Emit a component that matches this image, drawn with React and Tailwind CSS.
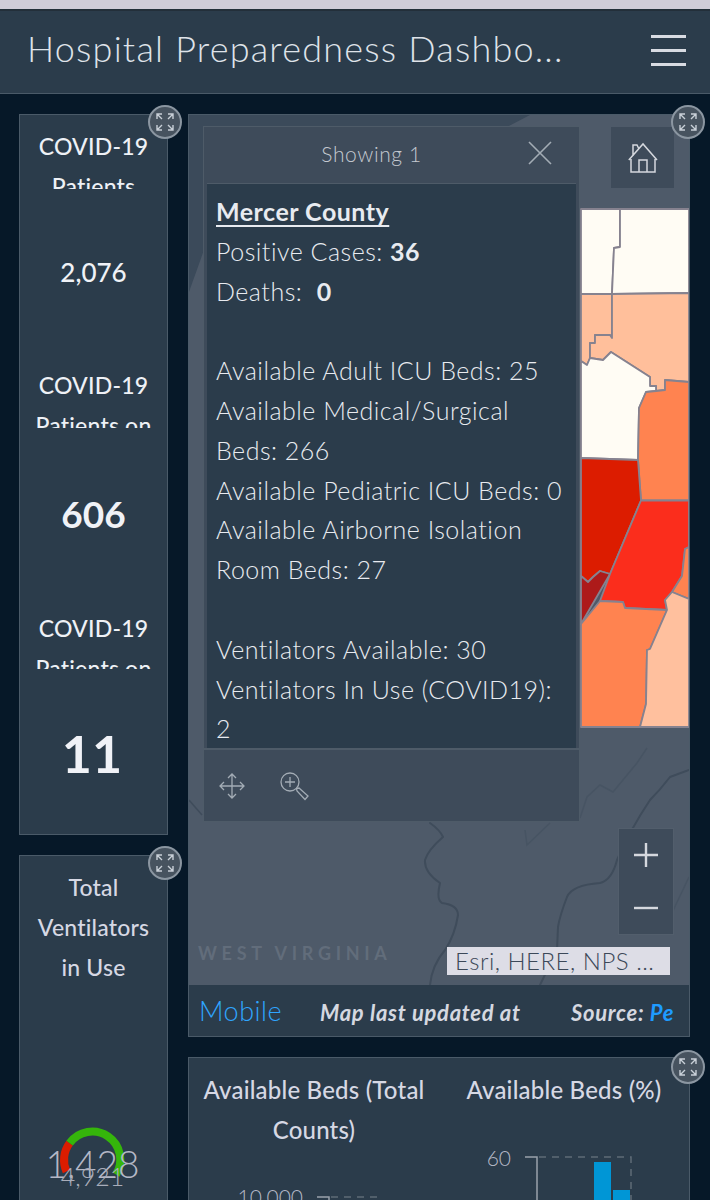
import React from 'react';

// expand badge that sits over the corner of each dashboard card
const ExpandBadge = ({ className }) => (
  <div className={`absolute z-20 flex h-[34px] w-[34px] items-center justify-center rounded-full border-2 border-[#8b96a1] bg-[#47535f] ${className}`}>
    <svg width="20" height="20" viewBox="0 0 20 20" fill="none" stroke="#c9d0d8" strokeWidth="1.4">
      <path d="M2 7V2h5M2 2l5 5M13 2h5v5M18 2l-5 5M2 13v5h5M2 18l5-5M18 13v5h-5M18 18l-5-5" />
    </svg>
  </div>
);

const StatSection = ({ title, value, height, titleHeight, valueClass }) => (
  <div className="flex flex-col" style={{ height }}>
    <div className="shrink-0 overflow-hidden pt-[11px] text-center text-[23px] font-medium leading-[40px] tracking-[0.2px] text-[#eef1f6]" style={{ height: titleHeight }}>
      COVID-19
      <br />
      {title}
    </div>
    <div className={`flex flex-1 items-center justify-center pt-[2px] text-[#f0f2f7] ${valueClass}`}>{value}</div>
  </div>
);

const PopupLine = ({ children }) => <div className="h-[39.8px] whitespace-nowrap">{children}</div>;

const MapDrawing = () => (
  <svg className="absolute inset-0 h-full w-full" viewBox="189 115 500 870" preserveAspectRatio="none">
    <path d="M189 115H530L505 128 204 250 189 292Z" fill="#3b4a5a" />
    <g fill="none" stroke="#3f4c5b" strokeWidth="2" strokeLinejoin="round" strokeLinecap="round">
      <path d="M430 823Q440 830 443 837Q428 850 425 860Q424 872 440 883Q436 900 442 903Q458 905 458 915Q455 935 445 950Q432 965 430 985" />
      <path d="M689 770L670 777Q660 790 650 800Q630 830 617 860Q612 880 600 883Q572 885 567 897Q560 915 558 927L557 950 540 985" />
    </g>
    <g fill="none" stroke="#475463" strokeWidth="1.5">
      <path d="M647 748L637 763 613 792 600 785 587 797 580 818" />
      <path d="M550 823L527 845 525 830" />
      <path d="M189 800L202 815" stroke="#3f4c5b" />
      <path d="M689 877L670 917" />
    </g>
    <g stroke="#86828f" strokeWidth="1.8" strokeLinejoin="round">
      <path fill="#fffcf4" d="M581 209H620V247L614 248 612 294H581Z" />
      <path fill="#fffcf4" d="M620 209H689V293L612 294 614 248 620 247Z" />
      <path fill="#ffbf9b" d="M581 294H612L612 338 610 335H595V343H590V358L587 365 581 361Z" />
      <path fill="#ffbf9b" d="M612 294L689 293V382L665 380V390L656 391V386H650V377L611 352 603 360 590 358V343H595V335H610L612 338Z" />
      <path fill="#fffcf4" d="M581 361L587 365 590 358 603 360 611 352 650 377V386H656V391L646 392 639 408 638 460 581 458Z" />
      <path fill="#ff8350" d="M646 392L656 391 665 390V380L689 382V500.5H641L638 460 639 408Z" />
      <path fill="#dc1c00" d="M581 458L638 460 641 500.5 610 574 600 571 593 577 588 582 581 576Z" />
      <path fill="#ad1a1a" d="M581 576L588 582 593 577 600 571 610 574 581 624Z" />
      <path fill="#fb2d1c" d="M641 500.5H689V547L685 549 682 576 672 592 665 600 667 610 625 608 623 602 600 601 610 574Z" />
      <path fill="#ff8350" d="M689 547L685 549 682 576 672 592 689 599Z" />
      <path fill="#ff8350" d="M581 624L600 601 623 602 625 608 667 610 650 649 647 650 646 704 640 727H581Z" />
      <path fill="#ffc09e" d="M672 592L689 599V727H640L646 704 647 650 650 649 667 610 665 600Z" />
    </g>
  </svg>
);

const App = () => {
  return (
    <div className="h-[1200px] w-[710px] overflow-hidden bg-[#061828] font-[Lato,sans-serif]">
      <div className="h-[9px] bg-[#cfccd8]" />
      <header className="flex h-[85px] items-center justify-between border-t-2 border-b border-t-[#232f3a] border-b-[#4a5a68] bg-[#2b3c4b] pl-[27px] pr-[24px]">
        <h1 className="mb-2 whitespace-nowrap text-[36px] font-light tracking-[1.2px] text-[#dfe3e9]">Hospital Preparedness Dashbo...</h1>
        <div className="mb-[3px] flex w-[35px] flex-col gap-[11px]">
          <div className="h-[3px] bg-[#d8dbe2]" />
          <div className="h-[3px] bg-[#d8dbe2]" />
          <div className="h-[3px] bg-[#d8dbe2]" />
        </div>
      </header>

      <div className="flex gap-5 pl-[19px] pt-5">
        {/* left column */}
        <div className="flex w-[149px] shrink-0 flex-col gap-5">
          <div className="relative h-[721px] border border-[#4a5a68] bg-[#2b3c4b]">
            <ExpandBadge className="-right-[15px] -top-[10px]" />
            <StatSection title="Patients" value="2,076" height="239px" titleHeight="74px" valueClass="text-[26px] font-medium" />
            <StatSection title="Patients on" value="606" height="243px" titleHeight="74px" valueClass="text-[37px] font-bold" />
            <StatSection title="Patients on" value="11" height="237px" titleHeight="72px" valueClass="pr-[3px] text-[52px] font-bold" />
          </div>
          <div className="relative h-[400px] border border-[#4a5a68] bg-[#2b3c4b]">
            <ExpandBadge className="-right-[15px] -top-[10px]" />
            <div className="pt-[11px] text-center text-[23px] font-medium leading-[40px] tracking-[0.2px] text-[#d6d8e4]">
              Total
              <br />
              Ventilators
              <br />
              in Use
            </div>
            <div className="relative mt-[133px] h-[70px]">
              <svg className="absolute left-[36px] top-[4px]" width="72" height="60" viewBox="0 0 72 60" fill="none" strokeWidth="8">
                <path d="M10.5 47.5A28 28 0 0 1 13.6 19.2" stroke="#dc1c00" />
                <path d="M13.6 19.2A28 28 0 0 1 60 50.5" stroke="#35b50b" />
              </svg>
              <div className="absolute inset-x-0 top-[18px] pr-[2px] text-center text-[37px] font-light leading-[52px] text-[#b5b8c6]">1,428</div>
              <div className="absolute inset-x-0 top-[37px] pr-[2px] text-center text-[25px] font-light leading-[38px] text-[#a9adba]">4,921</div>
            </div>
          </div>
        </div>

        {/* right column */}
        <div className="flex w-[502px] shrink-0 flex-col gap-5">
          <div className="relative border border-[#4a5a68] bg-[#2b3c4b]">
            <ExpandBadge className="-right-[16px] -top-[10px]" />
            <div className="relative h-[870px] overflow-hidden bg-[#4e5a69]">
              <MapDrawing />

              <div className="absolute left-[14px] top-[11px] flex h-[696px] w-[377px] flex-col border border-[#4e5b68] bg-[#3e4b5a]">
                <div className="relative flex h-[56px] shrink-0 items-center justify-center pb-[2px] pr-[40px] text-[21px] font-light tracking-[0.6px] text-[#c4c9d0]">
                  Showing 1
                  <svg className="absolute right-[27px] top-[14px]" width="24" height="24" viewBox="0 0 24 24" fill="none" stroke="#a3acb5" strokeWidth="1.6">
                    <path d="M1 1L23 23M23 1L1 23" />
                  </svg>
                </div>
                <div className="mx-[3px] h-[565px] shrink-0 overflow-hidden border-t border-[#4e5b68] bg-[#2b3c4b] pl-[9px] pt-[8px] text-[25px] font-light leading-[39.8px] tracking-[0.5px] text-[#e8ebf0]">
                  <PopupLine><span className="font-bold underline underline-offset-4">Mercer County</span></PopupLine>
                  <PopupLine>Positive Cases: <span className="font-bold">36</span></PopupLine>
                  <PopupLine>Deaths:&nbsp; <span className="font-bold">0</span></PopupLine>
                  <PopupLine />
                  <PopupLine>Available Adult ICU Beds: 25</PopupLine>
                  <PopupLine>Available Medical/Surgical</PopupLine>
                  <PopupLine>Beds: 266</PopupLine>
                  <PopupLine>Available Pediatric ICU Beds: 0</PopupLine>
                  <PopupLine>Available Airborne Isolation</PopupLine>
                  <PopupLine>Room Beds: 27</PopupLine>
                  <PopupLine />
                  <PopupLine>Ventilators Available: 30</PopupLine>
                  <PopupLine>Ventilators In Use (COVID19):</PopupLine>
                  <PopupLine>2</PopupLine>
                </div>
                <div className="flex flex-1 items-center gap-[33px] border-t-2 border-[#4e5b68] pl-[14px]">
                  <svg width="28" height="28" viewBox="0 0 28 28" fill="none" stroke="#a3acb5" strokeWidth="1.3">
                    <path d="M14 2V26M2 14H26M10 6L14 2 18 6M10 22L14 26 18 22M6 10L2 14 6 18M22 10L26 14 22 18" />
                  </svg>
                  <svg width="30" height="30" viewBox="0 0 30 30" fill="none" stroke="#a3acb5" strokeWidth="1.3">
                    <circle cx="11" cy="11" r="9" />
                    <path d="M11 6V16M6 11H16M17.5 17.5L20 17 29 25 26 28.5 18 20Z" />
                  </svg>
                </div>
              </div>

              <div className="absolute left-[422px] top-[12px] flex h-[61px] w-[63px] items-center justify-center bg-[#3e4b5a]">
                <svg width="30" height="32" viewBox="0 0 30 32" fill="none" stroke="#d5d8de" strokeWidth="1.5">
                  <path d="M3 17V30H27V17M0.8 18L15 2 29 18M5 14V3H9L11 7M11 30V18H19V30" />
                </svg>
              </div>

              <div className="absolute left-[429px] top-[713px] flex h-[107px] w-[56px] flex-col border border-[#525e6c] bg-[#3e4b5a]">
                <div className="flex flex-1 items-center justify-center">
                  <svg width="26" height="26" viewBox="0 0 26 26" stroke="#d5d8de" strokeWidth="2.4">
                    <path d="M13 1V25M1 13H25" />
                  </svg>
                </div>
                <div className="flex flex-1 items-center justify-center">
                  <svg width="26" height="4" viewBox="0 0 26 4" stroke="#d5d8de" strokeWidth="2.4">
                    <path d="M1 2H25" />
                  </svg>
                </div>
              </div>

              <div className="absolute left-[9px] top-[827px] text-[18px] font-bold leading-[22px] tracking-[4.7px] text-[#626d7b]">WEST VIRGINIA</div>

              <div className="absolute left-[258px] top-[832px] flex h-[28px] w-[223px] items-center bg-[#dddde6] pl-2 text-[24px] font-light tracking-[0.5px] text-[#3c4858]">
                Esri, HERE, NPS ...
              </div>
            </div>

            {/* strip under the map */}
            <div className="flex h-[51px] overflow-hidden">
              <div className="w-[131px] shrink-0 pl-[10px] pt-2 text-[27px] font-light leading-[36px] tracking-[0.5px] text-[#2fa5ff]">
                Mobile
                <br />
                Version
              </div>
              <div className="w-[251px] shrink-0 whitespace-nowrap pt-[15px] text-[22px] font-bold italic leading-[26px] tracking-[0.7px] text-[#d5d8e0]">Map last updated at</div>
              <div className="whitespace-nowrap pt-[15px] text-[22px] font-bold italic leading-[26px] tracking-[0.7px] text-[#d5d8e0]">
                Source: <span className="text-[#1e9bff]">Pe</span>
              </div>
            </div>
          </div>

          {/* beds charts */}
          <div className="relative h-[300px] border border-[#4a5a68] bg-[#2b3c4b]">
            <ExpandBadge className="-right-[16px] -top-[8px]" />
            <div className="flex">
              <div className="w-[250px]">
                <div className="pt-3 text-center text-[24px] font-medium leading-[40px] tracking-[0.2px] text-[#d6d8e4]">
                  Available Beds (Total
                  <br />
                  Counts)
                </div>
                <svg className="mt-[27px]" width="250" height="60" viewBox="0 0 250 60" fill="none">
                  <text x="114" y="28" textAnchor="end" fontSize="21" fontWeight="300" fill="#b5b8c6">10,000</text>
                  <path d="M128 20H140V60" stroke="#9aa1ac" strokeWidth="1.5" />
                  <path d="M142 20H190" stroke="#5f6b77" strokeWidth="1.5" strokeDasharray="7 6" />
                </svg>
              </div>
              <div className="w-[250px]">
                <div className="pt-3 text-center text-[24px] font-medium leading-[40px] tracking-[0.2px] text-[#d6d8e4]">Available Beds (%)</div>
                <svg width="250" height="60" viewBox="0 0 250 60" fill="none" className="mt-[39px]">
                  <text x="72" y="17" textAnchor="end" fontSize="21" fontWeight="300" fill="#b5b8c6">60</text>
                  <path d="M86 8H98V60" stroke="#9aa1ac" strokeWidth="1.5" />
                  <path d="M100 8H192V60" stroke="#5f6b77" strokeWidth="1.5" strokeDasharray="7 6" />
                  <rect x="155" y="13" width="17" height="47" fill="#0096d6" />
                  <rect x="174" y="41" width="17" height="19" fill="#0096d6" />
                </svg>
              </div>
            </div>
          </div>
        </div>
      </div>
    </div>
  );
};

export default App;
